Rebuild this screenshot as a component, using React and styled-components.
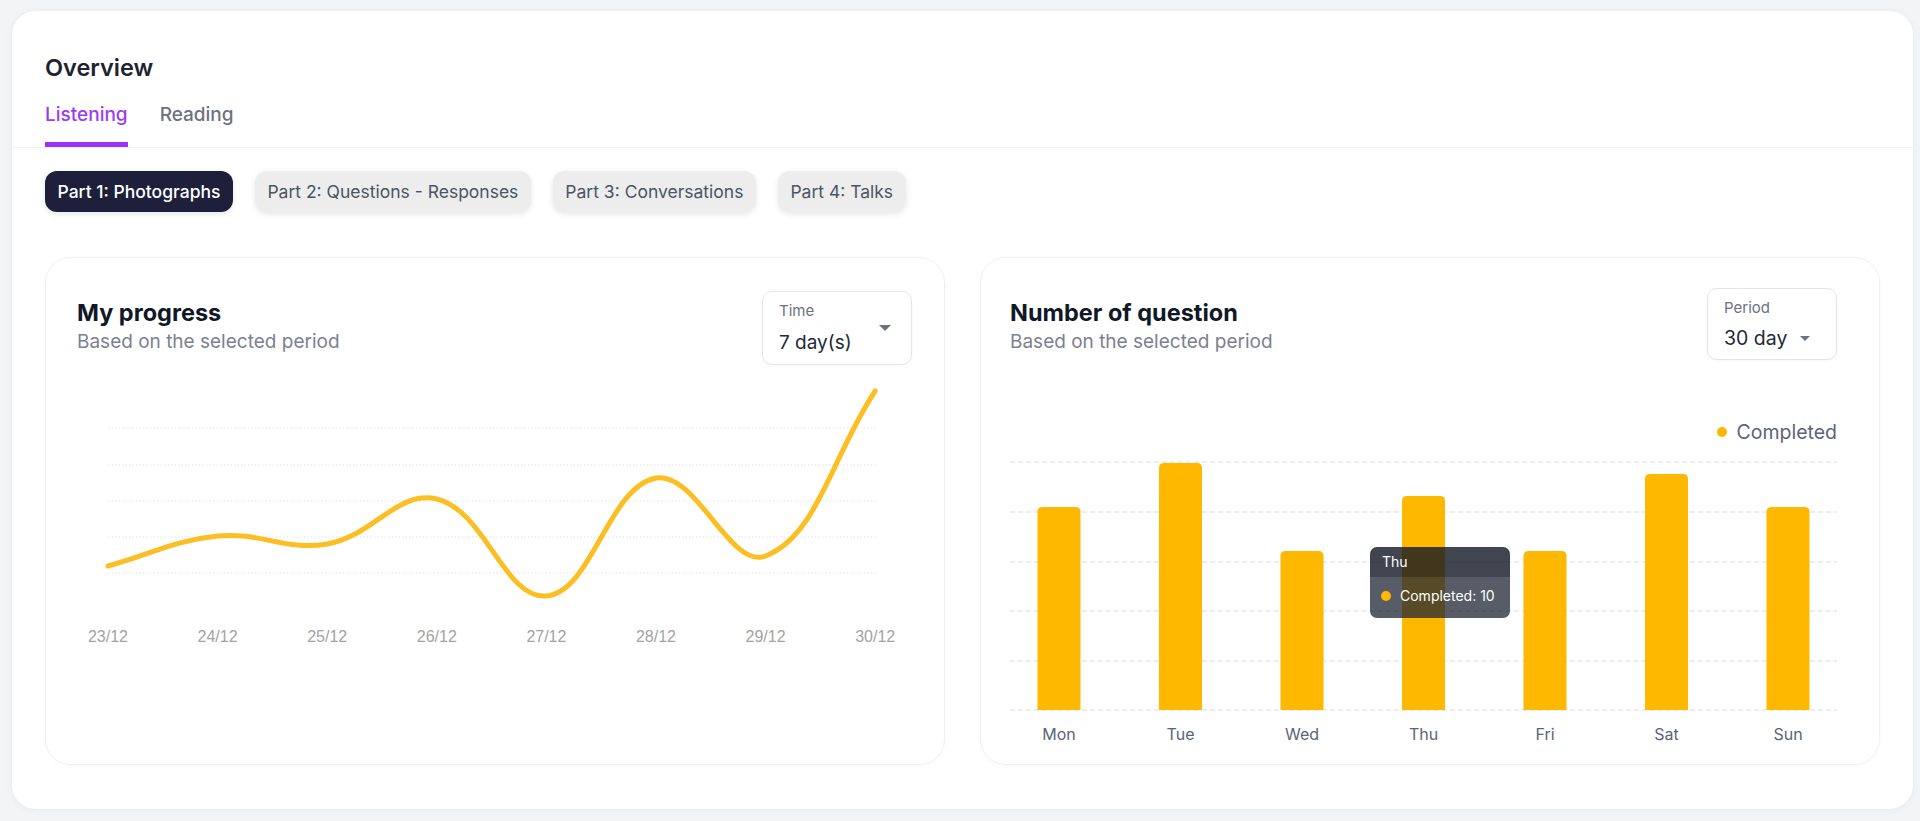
import React, { useState } from 'react';
import styled, { createGlobalStyle } from 'styled-components';

const GlobalStyle = createGlobalStyle`
  * { box-sizing: border-box; }
  body {
    margin: 0;
    background: #f3f4f6;
    font-family: Inter, "Noto Sans", sans-serif;
  }
`;

const parts = ['Part 1: Photographs', 'Part 2: Questions - Responses', 'Part 3: Conversations', 'Part 4: Talks'];
const dates = ['23/12', '24/12', '25/12', '26/12', '27/12', '28/12', '29/12', '30/12'];
const progress = [201, 171, 179, 134, 231, 113, 191, 26]; // svg y
const days = [
  { day: 'Mon', top: 52 },
  { day: 'Tue', top: 8 },
  { day: 'Wed', top: 96 },
  { day: 'Thu', top: 41 },
  { day: 'Fri', top: 96 },
  { day: 'Sat', top: 19 },
  { day: 'Sun', top: 52 },
];

// chart.js style tension curve
const smoothPath = (pts, t = 0.4) => {
  const cps = pts.map((p, i) => {
    const prev = pts[i - 1] || p;
    const next = pts[i + 1] || p;
    const d01 = Math.hypot(p[0] - prev[0], p[1] - prev[1]);
    const d12 = Math.hypot(next[0] - p[0], next[1] - p[1]);
    const s = d01 + d12 || 1;
    const fa = (t * d01) / s;
    const fb = (t * d12) / s;
    return {
      in: [p[0] - fa * (next[0] - prev[0]), p[1] - fa * (next[1] - prev[1])],
      out: [p[0] + fb * (next[0] - prev[0]), p[1] + fb * (next[1] - prev[1])],
    };
  });
  let d = `M${pts[0][0]},${pts[0][1]}`;
  for (let i = 1; i < pts.length; i++) {
    d += ` C${cps[i - 1].out.join(',')} ${cps[i].in.join(',')} ${pts[i].join(',')}`;
  }
  return d;
};

const Page = styled.div`
  padding: 11px 7px 12px 12px;
`;

const Panel = styled.div`
  background: #fff;
  border-radius: 24px;
  box-shadow: 0 1px 8px rgba(15, 23, 42, 0.05);
  height: 798px;
`;

const PanelHead = styled.div`
  padding: 43px 33px 0;
`;

const Heading = styled.h1`
  margin: 0;
  font-size: 23.5px;
  line-height: 28px;
  font-weight: 600;
  color: #1e2330;
`;

const TabBar = styled.div`
  display: flex;
  gap: 32px;
  margin-top: 21px;
  padding: 0 33px;
  border-bottom: 1px solid #f0f1f3;
`;

const Tab = styled.div`
  font-size: 19px;
  line-height: 24px;
  font-weight: 500;
  padding-bottom: 15px;
  color: ${(p) => (p.$active ? '#9b3cf5' : '#6b7280')};
  border-bottom: 5px solid ${(p) => (p.$active ? '#9b30ff' : 'transparent')};
  cursor: pointer;
`;

const Body = styled.div`
  padding: 23px 33px 0;
`;

const ChipRow = styled.div`
  display: flex;
  gap: 22px;
`;

const Chip = styled.button`
  height: 41px;
  padding: 0 12.5px;
  border: none;
  border-radius: 12px;
  font-family: inherit;
  font-size: 17.5px;
  font-weight: ${(p) => (p.$active ? 500 : 400)};
  color: ${(p) => (p.$active ? '#ffffff' : '#4b5563')};
  background: ${(p) => (p.$active ? '#1d1f3b' : '#ededed')};
  box-shadow: 0 2px 6px rgba(0, 0, 0, 0.1);
  cursor: pointer;
`;

const Cards = styled.div`
  display: grid;
  grid-template-columns: 1fr 1fr;
  gap: 35px;
  margin-top: 45px;
`;

const Card = styled.div`
  height: 508px;
  border: 1px solid #eef0f2;
  border-radius: 26px;
  box-shadow: 0 1px 4px rgba(15, 23, 42, 0.03);
  padding: ${(p) => p.$pad};
`;

const CardHead = styled.div`
  display: flex;
  justify-content: space-between;
  align-items: flex-start;
`;

const TitleBlock = styled.div`
  margin-top: ${(p) => p.$top}px;
`;

const CardTitle = styled.h2`
  margin: 0;
  font-size: 23.5px;
  line-height: 28px;
  font-weight: 700;
  color: #111827;
`;

const CardSub = styled.div`
  margin-top: 3px;
  font-size: 19px;
  line-height: 24px;
  color: #7b8190;
`;

const Select = styled.div`
  position: relative;
  width: ${(p) => p.$width}px;
  border: 1px solid #e3e5e8;
  border-radius: 10px;
  padding: 9px 16px 9px;
  box-shadow: 0 1px 3px rgba(0, 0, 0, 0.04);
  cursor: pointer;
`;

const SelectLabel = styled.div`
  font-size: 15px;
  line-height: 20px;
  color: #6b7280;
`;

const SelectValue = styled.div`
  display: flex;
  align-items: center;
  gap: 13px;
  margin-top: ${(p) => (p.$inline ? 8 : 10)}px;
  font-size: ${(p) => p.$size}px;
  line-height: 24px;
  color: #1f2937;
`;

const Caret = styled.span`
  width: 0;
  height: 0;
  border-left: ${(p) => p.$w}px solid transparent;
  border-right: ${(p) => p.$w}px solid transparent;
  border-top: ${(p) => p.$w}px solid #6b7280;
  ${(p) => p.$side && `position: absolute; right: 20px; top: 33px;`}
`;

const ChartSvg = styled.svg`
  display: block;
  overflow: visible;
`;

const Legend = styled.div`
  display: flex;
  justify-content: flex-end;
  align-items: center;
  gap: 9px;
  margin-top: 60px;
  font-size: 19.5px;
  line-height: 24px;
  color: #5b6478;
`;

const Dot = styled.span`
  width: ${(p) => p.$size}px;
  height: ${(p) => p.$size}px;
  border-radius: 50%;
  background: #ffb800;
`;

const ChartWrap = styled.div`
  position: relative;
  margin-top: 11px;
`;

const Tooltip = styled.div`
  position: absolute;
  left: 360px;
  top: 92px;
  width: 140px;
  border-radius: 7px;
  overflow: hidden;
  color: #fff;
  font-size: 14px;
`;

const TipHead = styled.div`
  height: 30px;
  line-height: 30px;
  padding-left: 12px;
  background: rgba(17, 22, 35, 0.8);
`;

const TipBody = styled.div`
  display: flex;
  align-items: center;
  gap: 9px;
  height: 41px;
  padding: 0 0 4px 11px;
  background: rgba(31, 38, 52, 0.75);
`;

const Dropdown = ({ label, value, width, inline, size }) => (
  <Select $width={width}>
    <SelectLabel>{label}</SelectLabel>
    <SelectValue $size={size} $inline={inline}>
      {value}
      {inline && <Caret $w={5} />}
    </SelectValue>
    {!inline && <Caret $w={6} $side />}
  </Select>
);

const ProgressChart = () => {
  const pts = progress.map((y, i) => [31 + i * 109.6, y]);
  return (
    <ChartSvg width="834" height="300" viewBox="0 0 834 300">
      {[63, 100, 136, 172, 208].map((y) => (
        <line key={y} x1="31" x2="799" y1={y} y2={y} stroke="#ececec" strokeWidth="1.5" strokeDasharray="1.5 2" />
      ))}
      <path d={smoothPath(pts)} fill="none" stroke="#fbbf24" strokeWidth="5" strokeLinecap="round" />
      {dates.map((d, i) => (
        <text
          key={d}
          x={31 + i * 109.6}
          y="277"
          textAnchor="middle"
          fontFamily="'Liberation Sans', Arial, sans-serif"
          fontSize="16"
          fill="#a3a3a3"
        >
          {d}
        </text>
      ))}
    </ChartSvg>
  );
};

const QuestionChart = () => (
  <ChartWrap>
    <ChartSvg width="827" height="295" viewBox="0 0 827 295">
      {[7, 57, 107, 156, 206, 255].map((y) => (
        <line key={y} x1="0" x2="827" y1={y} y2={y} stroke="#e5e7eb" strokeWidth="1.5" strokeDasharray="5 3" />
      ))}
      {days.map((d, i) => {
        const cx = 49 + i * 121.5;
        return (
          <g key={d.day}>
            <path
              d={`M${cx - 21.5},255 V${d.top + 5} Q${cx - 21.5},${d.top} ${cx - 16.5},${d.top} H${cx + 16.5} Q${cx + 21.5},${d.top} ${cx + 21.5},${d.top + 5} V255 Z`}
              fill="#ffb800"
            />
            <text x={cx} y="285" textAnchor="middle" fontFamily="Inter, sans-serif" fontSize="16" fill="#5b6478">
              {d.day}
            </text>
          </g>
        );
      })}
    </ChartSvg>
    <Tooltip>
      <TipHead>Thu</TipHead>
      <TipBody>
        <Dot $size={10} />
        Completed: 10
      </TipBody>
    </Tooltip>
  </ChartWrap>
);

export default function App() {
  const [tab, setTab] = useState('Listening');
  const [part, setPart] = useState(parts[0]);

  return (
    <Page>
      <GlobalStyle />
      <Panel>
        <PanelHead>
          <Heading>Overview</Heading>
        </PanelHead>
        <TabBar>
          {['Listening', 'Reading'].map((t) => (
            <Tab key={t} $active={tab === t} onClick={() => setTab(t)}>
              {t}
            </Tab>
          ))}
        </TabBar>
        <Body>
          <ChipRow>
            {parts.map((p) => (
              <Chip key={p} $active={part === p} onClick={() => setPart(p)}>
                {p}
              </Chip>
            ))}
          </ChipRow>
          <Cards>
            <Card $pad="33px 32px 0 31px">
              <CardHead>
                <TitleBlock $top={8}>
                  <CardTitle>My progress</CardTitle>
                  <CardSub>Based on the selected period</CardSub>
                </TitleBlock>
                <Dropdown label="Time" value="7 day(s)" width={150} size={19} />
              </CardHead>
              <ProgressChart />
            </Card>
            <Card $pad="30px 42px 0 29px">
              <CardHead>
                <TitleBlock $top={11}>
                  <CardTitle>Number of question</CardTitle>
                  <CardSub>Based on the selected period</CardSub>
                </TitleBlock>
                <Dropdown label="Period" value="30 day" width={130} size={19.5} inline />
              </CardHead>
              <Legend>
                <Dot $size={10} />
                Completed
              </Legend>
              <QuestionChart />
            </Card>
          </Cards>
        </Body>
      </Panel>
    </Page>
  );
}
